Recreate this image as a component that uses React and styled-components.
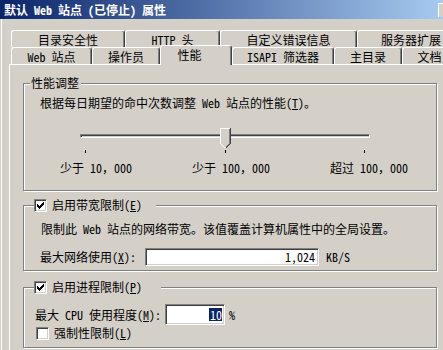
import React from "react";
import styled, { createGlobalStyle, css } from "styled-components";

const FACE = "#d4d0c8";
const SHADOW = "#808080";
const DARK = "#404040";

const GlobalStyle = createGlobalStyle`
  html, body {
    margin: 0;
    padding: 0;
    background: ${FACE};
  }
  body {
    font-family: "Noto Sans Mono CJK SC", "Noto Sans CJK SC", "Liberation Mono", monospace;
    font-size: 12px;
    line-height: 14px;
    color: #000;
  }
`;

const Window = styled.div`
  width: 443px;
  height: 350px;
  overflow: hidden;
  background: ${FACE};
  display: flex;
  flex-direction: column;
`;

const TitleBar = styled.div`
  flex: none;
  height: 19px;
  display: flex;
  align-items: center;
  padding-left: 4px;
  background: linear-gradient(to right, #0a246a, #a6caf0);
  color: #fff;
  font-weight: bold;
  white-space: nowrap;
`;

const TitleButton = styled.div`
  flex: none;
  width: 16px;
  height: 14px;
  margin-left: auto;
  margin-right: -11px;
  box-sizing: border-box;
  border-top: 1px solid #fff;
  border-left: 1px solid #fff;
  background: ${FACE};
`;

const Body = styled.div`
  flex: 1;
  min-height: 0;
  margin-left: 1px;
  border-left: 1px solid #fff;
  padding: 11px 0 0 7px;
  display: flex;
  flex-direction: column;
`;

const TabRow = styled.div`
  display: flex;
  align-items: flex-end;
  height: 17px;
  margin-left: 2px;
`;

const Tab = styled.div`
  flex: 0 0 ${(p) => p.$w}px;
  height: ${(p) => (p.$active ? 20 : 17)}px;
  box-sizing: border-box;
  border: 1px solid #fff;
  border-bottom: none;
  border-right-color: ${DARK};
  border-radius: 3px 3px 0 0;
  box-shadow: inset -1px 0 0 ${SHADOW};
  background: ${FACE};
  display: flex;
  align-items: center;
  justify-content: center;
  line-height: 13px;
  white-space: nowrap;
  ${(p) =>
    p.$active &&
    css`
      position: relative;
      z-index: 1;
      margin-bottom: -1px;
      padding: 1px 13px 4px 0;
    `}
`;

const Panel = styled.div`
  flex: 1;
  width: 460px;
  border-top: 1px solid #fff;
  border-left: 1px solid #fff;
  padding: 11px 0 0 13px;
`;

const Group = styled.fieldset`
  margin: ${(p) => p.$mt}px 0 0 0;
  padding: 0 0 ${(p) => p.$pb}px 0;
  width: 414px;
  min-width: 0;
  box-sizing: border-box;
  border: 1px solid ${SHADOW};
  box-shadow: inset 1px 1px 0 #fff, 1px 1px 0 #fff;
`;

const Legend = styled.legend`
  margin-left: ${(p) => p.$ml}px;
  padding: 0 ${(p) => p.$pr}px 0 ${(p) => p.$pl}px;
  line-height: 14px;
  background: ${FACE};
`;

const LegendInner = styled.span`
  display: flex;
  align-items: center;
  gap: 5px;
`;

const Text = styled.div`
  margin: ${(p) => p.$mt}px 0 0 ${(p) => p.$ml}px;
  white-space: nowrap;
`;

const SliderBox = styled.div`
  position: relative;
  width: 290px;
  margin: 18px 0 0 56px;
  padding-top: 6px;
`;

const Track = styled.div`
  height: 4px;
  box-sizing: border-box;
  border: 1px solid;
  border-color: ${SHADOW} #fff #fff ${SHADOW};
  box-shadow: inset 1px 1px 0 ${DARK};
  background: ${FACE};
`;

const Thumb = styled.svg`
  position: absolute;
  top: 0;
  display: block;
`;

const Ticks = styled.div`
  width: 290px;
  height: 3px;
  box-sizing: border-box;
  margin: 12px 0 0 56px;
  padding: 0 5px;
  display: flex;
  justify-content: space-between;
`;

const Tick = styled.span`
  width: 1px;
  height: 3px;
  background: #000;
`;

const ScaleLabels = styled.div`
  display: flex;
  gap: 60px;
  margin-top: 8px;
  padding-left: 36px;
  white-space: nowrap;
`;

const FieldRow = styled.div`
  display: flex;
  align-items: center;
  margin: ${(p) => p.$mt}px 0 0 ${(p) => p.$ml}px;
  white-space: nowrap;
`;

const TextBox = styled.div`
  flex: none;
  width: ${(p) => p.$w}px;
  height: ${(p) => p.$h}px;
  margin: 0 ${(p) => p.$gr}px 0 ${(p) => p.$gl}px;
  box-sizing: border-box;
  border: 1px solid;
  border-color: ${SHADOW} #fff #fff ${SHADOW};
  box-shadow: inset 1px 1px 0 ${DARK}, inset -1px -1px 0 ${FACE};
  background: #fff;
  display: flex;
  align-items: center;
  justify-content: flex-end;
  padding-right: ${(p) => p.$pr}px;
`;

const Selected = styled.span`
  background: #0a246a;
  color: #fff;
  line-height: 13px;
  padding-left: 1px;
`;

const CheckRow = styled.div`
  display: flex;
  align-items: center;
  gap: 5px;
  margin: 1px 0 0 12px;
`;

const Box = styled.span`
  flex: none;
  display: block;
  width: 13px;
  height: 13px;
  box-sizing: border-box;
  border: 1px solid;
  border-color: ${SHADOW} #fff #fff ${SHADOW};
  box-shadow: inset 1px 1px 0 ${DARK}, inset -1px -1px 0 ${FACE};
  background: #fff;
  svg {
    display: block;
  }
`;

const checkCols = [2, 3, 4, 3, 2, 1, 0];

const CheckBox = ({ checked }) => (
  <Box>
    {checked && (
      <svg width="11" height="11" shapeRendering="crispEdges">
        {checkCols.map((y, i) => (
          <rect key={i} x={2 + i} y={2 + y} width="1" height="3" fill="#000" />
        ))}
      </svg>
    )}
  </Box>
);

const SliderThumb = ({ left }) => (
  <Thumb width="11" height="21" style={{ left }} shapeRendering="crispEdges">
    <path d="M0 0H11V16L5.5 21.5L0 16Z" fill={FACE} />
    <path d="M0.5 16V0.5H10" stroke="#fff" fill="none" />
    <path d="M0.5 15.5L5.5 20.5" stroke="#fff" fill="none" />
    <path d="M10.5 0V15.5L5.5 20.5" stroke={DARK} fill="none" />
    <path d="M9.5 1V15.5L5.5 19.5" stroke={SHADOW} fill="none" />
  </Thumb>
);

const topTabs = [
  ["目录安全性", 114],
  ["HTTP 头", 95],
  ["自定义错误信息", 137],
  ["服务器扩展", 108],
];

const frontTabs = [
  ["Web 站点", 81],
  ["操作员", 68],
  ["性能", 72, true],
  ["ISAPI 筛选器", 102],
  ["主目录", 68],
  ["文档", 55],
];

const sliderValue = 1;
const sliderMax = 2;

export default function App() {
  const thumbLeft = 5 + (280 * sliderValue) / sliderMax - 5;

  return (
    <>
      <GlobalStyle />
      <Window>
        <TitleBar>
          默认 Web 站点 (已停止) 属性
          <TitleButton />
        </TitleBar>
        <Body>
          <TabRow>
            {topTabs.map(([label, w]) => (
              <Tab key={label} $w={w}>
                {label}
              </Tab>
            ))}
          </TabRow>
          <TabRow>
            {frontTabs.map(([label, w, active]) => (
              <Tab key={label} $w={w} $active={active}>
                {label}
              </Tab>
            ))}
          </TabRow>
          <Panel>
            <Group $mt={0} $pb={15}>
              <Legend $ml={6} $pl={1} $pr={2}>
                性能调整
              </Legend>
              <Text $mt={6} $ml={16}>
                根据每日期望的命中次数调整 Web 站点的性能(<u>T</u>)。
              </Text>
              <SliderBox>
                <Track />
                <SliderThumb left={thumbLeft} />
              </SliderBox>
              <Ticks>
                <Tick />
                <Tick />
                <Tick />
              </Ticks>
              <ScaleLabels>
                <span>少于 10，000</span>
                <span>少于 100，000</span>
                <span>超过 100，000</span>
              </ScaleLabels>
            </Group>

            <Group $mt={7} $pb={4}>
              <Legend $ml={10} $pl={0} $pr={14}>
                <LegendInner>
                  <CheckBox checked />
                  <span>
                    启用带宽限制(<u>E</u>)
                  </span>
                </LegendInner>
              </Legend>
              <Text $mt={10} $ml={17}>
                限制此 Web 站点的网络带宽。该值覆盖计算机属性中的全局设置。
              </Text>
              <FieldRow $mt={12} $ml={16}>
                <span>
                  最大网络使用(<u>X</u>):
                </span>
                <TextBox $w={174} $h={18} $gl={9} $gr={7} $pr={3}>
                  1,024
                </TextBox>
                <span>KB/S</span>
              </FieldRow>
            </Group>

            <Group $mt={9} $pb={7}>
              <Legend $ml={10} $pl={0} $pr={19}>
                <LegendInner>
                  <CheckBox checked />
                  <span>
                    启用进程限制(<u>P</u>)
                  </span>
                </LegendInner>
              </Legend>
              <FieldRow $mt={10} $ml={11}>
                <span>
                  最大 CPU 使用程度(<u>M</u>):
                </span>
                <TextBox $w={60} $h={21} $gl={4} $gr={4} $pr={2}>
                  <Selected>10</Selected>
                </TextBox>
                <span>%</span>
              </FieldRow>
              <CheckRow>
                <CheckBox />
                <span>
                  强制性限制(<u>L</u>)
                </span>
              </CheckRow>
            </Group>
          </Panel>
        </Body>
      </Window>
    </>
  );
}
